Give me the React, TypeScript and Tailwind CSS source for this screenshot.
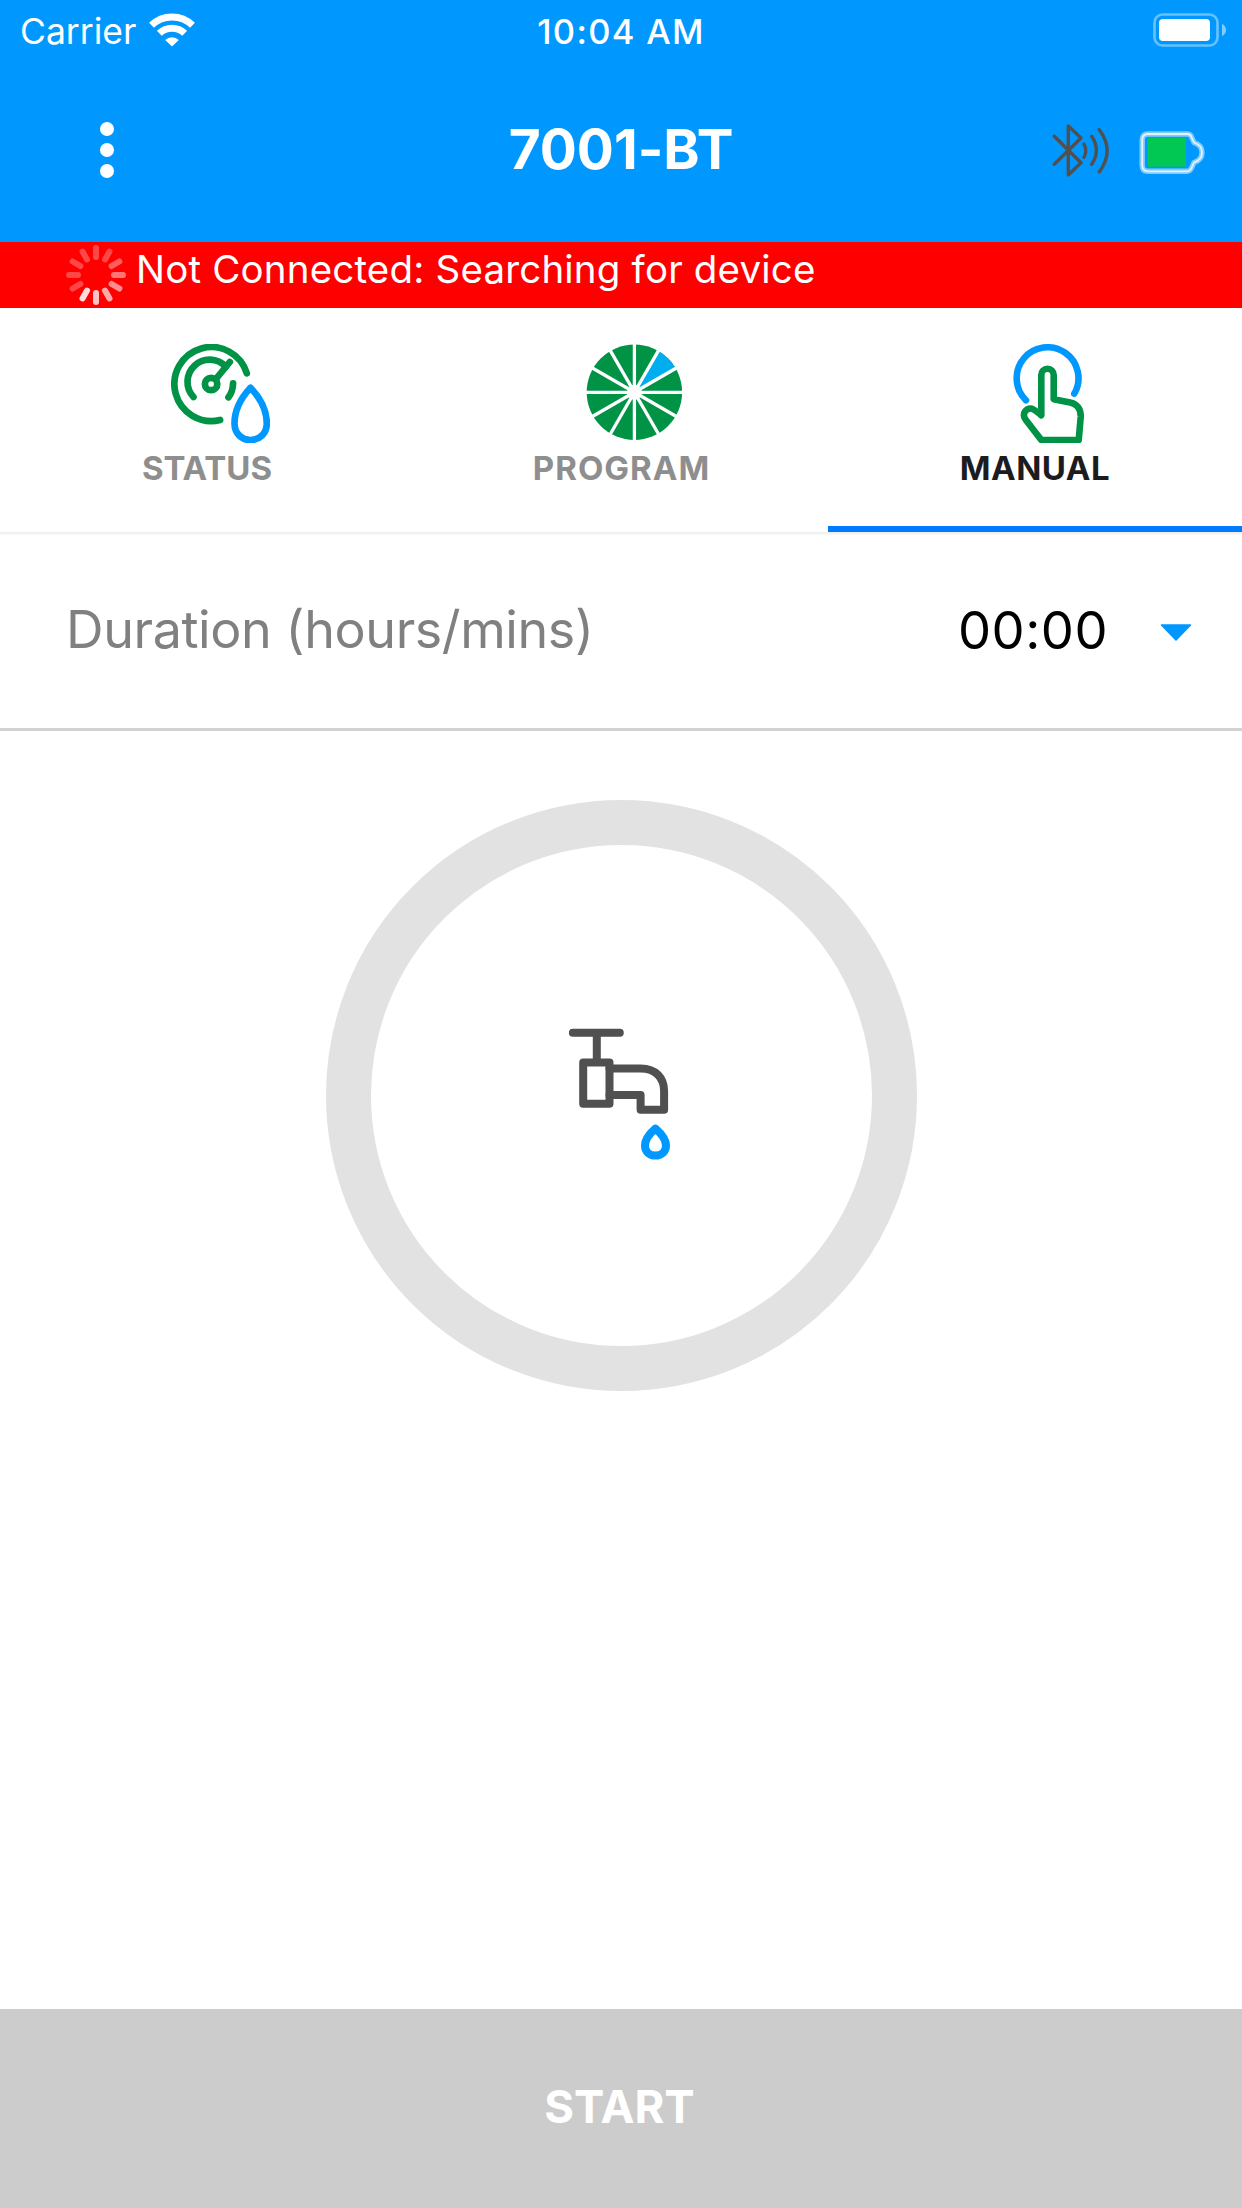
import type { ReactNode } from "react";

const GREEN = "#009245";
const BLUE = "#0098ff";

function WifiIcon() {
  return (
    <svg width="46" height="34" viewBox="0 0 46 34" fill="none" stroke="#fff" strokeWidth="7">
      <path d="M2.5 12.3A29.5 29.5 0 0 1 43.5 12.3" />
      <path d="M10.3 20.3A18.3 18.3 0 0 1 35.7 20.3" />
      <path d="M23 33.5L16.2 26.9A10.3 10.3 0 0 1 29.8 26.9Z" fill="#fff" stroke="none" />
    </svg>
  );
}

function PhoneBatteryIcon() {
  return (
    <svg width="76" height="36" viewBox="1152 12 76 36" fill="#fff">
      <rect x="1154.5" y="14.5" width="63" height="31" rx="8" fill="none" stroke="#66c1ff" strokeWidth="2.7" />
      <rect x="1159" y="19" width="51" height="22" rx="4" />
      <path d="M1222 23.7Q1226 26 1226 30Q1226 34 1222 36.3Z" fill="#80ccff" />
    </svg>
  );
}

function BluetoothIcon() {
  return (
    <svg width="58" height="54" viewBox="0 0 58 54" fill="none" stroke="#505050" strokeWidth="3.4" strokeLinecap="round" strokeLinejoin="round">
      <path d="M2.3 40.3L29 14L16.3 2V51L29 38.7L2.3 12.3" />
      <path d="M32 20Q35.5 26.7 32 33.3M39.7 12.3Q49 26.3 39.7 40.3M47.3 5.7Q63 26.7 47.3 48" />
    </svg>
  );
}

function DeviceBatteryIcon() {
  const outline =
    "M9 3H48Q51.5 3 52.5 6L55 11.5Q63 14 63 21.5Q63 29 55 31.5L52.5 37Q51 40.3 48 40.3H9Q3.2 40.3 3.2 34V9Q3.2 3 9 3Z";
  return (
    <svg width="66" height="43" viewBox="0 0 66 43" fill="none" strokeLinejoin="round">
      <path d={outline} stroke="#80ccff" strokeWidth="5.4" />
      <path d={outline} stroke="#e2f3ff" strokeWidth="1.8" />
      <rect x="8.7" y="6.7" width="38.3" height="29" fill="#00c853" />
    </svg>
  );
}

const SPOKES = [0.28, 0.28, 0.36, 0.46, 0.56, 0.66, 0.76, 0.86, 0.28, 0.28, 0.28, 0.28];

function Spinner() {
  return (
    <svg width="60" height="60" viewBox="-30 -30 60 60">
      {SPOKES.map((opacity, i) => (
        <rect key={i} x="-3" y="-30" width="6" height="15" rx="3" fill="#fff" opacity={opacity} transform={`rotate(${i * 30})`} />
      ))}
    </svg>
  );
}

function StatusIcon() {
  return (
    <svg width="99" height="99" viewBox="0.2 0 99 99" fill="none" stroke={GREEN} strokeWidth="6.7" strokeLinecap="round" strokeLinejoin="round">
      <path d="M76 29.3A37 37 0 1 0 49.3 76" />
      <path d="M22.7 53A21.5 21.5 0 0 1 55 22.7" />
      <path d="M45.5 34.5L59 18" />
      <circle cx="40.3" cy="40" r="6.2" />
      <path d="M62.3 39.3Q62 47.5 57.7 53.3" />
      <path d="M79.7 43.7C70 54 63.7 67 63.7 79.5C63.7 89.5 71 96 79.8 96C88.6 96 96 89.5 96 79.5C96 67 89.4 54 79.7 43.7Z" stroke={BLUE} />
    </svg>
  );
}

function ProgramIcon() {
  return (
    <svg width="99" height="99" viewBox="-49.4 -48.3 99 99">
      <circle r="47.7" fill={GREEN} />
      <path d="M0 0L23.85 -41.31A47.7 47.7 0 0 1 41.31 -23.85Z" fill="#00adef" />
      {[0, 30, 60, 90, 120, 150].map((a) => (
        <path key={a} d="M0 -49V49" stroke="#fff" strokeWidth="3.3" transform={`rotate(${a})`} />
      ))}
      <circle r="7.5" fill="#fff" />
    </svg>
  );
}

function ManualIcon() {
  return (
    <svg width="99" height="99" viewBox="0 0 99 99" fill="none" stroke={GREEN} strokeWidth="6.6" strokeLinecap="round" strokeLinejoin="round">
      <path d="M27 56.3A30.9 30.9 0 1 1 75.3 49.7" stroke={BLUE} />
      <path d="M42.3 71.3V31A6.2 6.2 0 0 1 54.7 31V55.3L71 58.6C78.5 60 82 65.5 81.7 73L79.7 96H42.3L26.5 75.5C22.5 69.5 27 64.3 32 64.5C34.5 64.6 36 66.5 42.3 71.3Z" />
    </svg>
  );
}

function TapIcon() {
  return (
    <svg width="104" height="135" viewBox="29.2 28 104 135" fill="none" stroke="#505050" strokeWidth="8" strokeLinecap="round" strokeLinejoin="round">
      <path d="M33 32.8H80M57 33V62" />
      <rect x="43.4" y="62.4" width="26.3" height="41.4" />
      <path d="M69.7 68.5H101C116 68.5 124.3 78 124.3 91V109.7H100.8V94.9H69.7" />
      <path d="M115.6 128.6C110 133.5 105.2 140 105.2 145.5C105.2 152 110 155.6 115.6 155.6C121.2 155.6 126.2 152 126.2 145.5C126.2 140 121.2 133.5 115.6 128.6Z" stroke={BLUE} />
    </svg>
  );
}

function Tab({ icon, active, children }: { icon: ReactNode; active?: boolean; children: ReactNode }) {
  return (
    <button
      className={
        active
          ? "flex flex-1 flex-col items-center border-b-6 border-[#007aff] pt-9 text-[#1c1c1e]"
          : "flex flex-1 flex-col items-center border-b-6 border-transparent pt-9 text-[#8e8e8e]"
      }
    >
      <span className="pl-[27px]">{icon}</span>
      <span className="mt-[5px] text-[33px] leading-10 font-bold">{children}</span>
    </button>
  );
}

export default function App() {
  return (
    <div className="flex h-[2208px] w-[1242px] flex-col bg-white font-['Inter',sans-serif]">
      <header className="h-[242px] bg-[#0098ff] text-white">
        <div className="grid h-[63px] grid-cols-3 items-center px-5">
          <div className="flex items-center gap-[13px]">
            <span className="text-[35.5px] leading-none">Carrier</span>
            <span className="-mt-1"><WifiIcon /></span>
          </div>
          <span className="pt-px text-center text-[34.5px] leading-none font-medium tracking-[1.3px] whitespace-nowrap">10:04 AM</span>
          <span className="-mt-[3px] -mr-[6px] justify-self-end"><PhoneBatteryIcon /></span>
        </div>
        <div className="grid h-[179px] grid-cols-3 items-center pr-[37px] pb-[7px] pl-[100px]">
          <button className="mt-[2px] flex w-[14px] flex-col items-center gap-[7px]">
            <span className="size-[14px] rounded-full bg-white" />
            <span className="size-[14px] rounded-full bg-white" />
            <span className="size-[14px] rounded-full bg-white" />
          </button>
          <h1 className="-ml-[63px] text-center text-[55px] leading-none font-bold [font-feature-settings:'calt'_0]">7001-BT</h1>
          <div className="mt-1 flex items-center justify-end gap-[29px]">
            <BluetoothIcon />
            <span className="mt-[3px]"><DeviceBatteryIcon /></span>
          </div>
        </div>
      </header>

      <div className="flex h-[66px] items-center bg-[#ff0000] pl-[66px] text-white">
        <Spinner />
        <span className="-mt-3 ml-[10px] text-[38.5px] leading-none tracking-[0.18px]">Not Connected: Searching for device</span>
      </div>

      <nav className="flex h-56">
        <Tab icon={<StatusIcon />}>STATUS</Tab>
        <Tab icon={<ProgramIcon />}><span className="pl-px tracking-[1px]">PROGRAM</span></Tab>
        <Tab icon={<ManualIcon />} active><span className="tracking-[0.5px]">MANUAL</span></Tab>
      </nav>
      <div className="h-[3px] bg-linear-to-b from-[#ececec] to-[#fafafa]" />

      <div className="flex h-[196px] items-center justify-between border-b-3 border-[#d3d3d3] pr-[50px] pb-[3px] pl-[66px]">
        <span className="text-[52px] leading-none tracking-[-0.4px] text-[#808080]">Duration (hours/mins)</span>
        <div className="flex items-center gap-[52px] text-black">
          <span className="text-[52.5px] leading-none tracking-[0.5px] [font-feature-settings:'calt'_0]">00:00</span>
          <svg width="32" height="18" viewBox="0 0 32 18" className="mt-[6px]">
            <path d="M1.5 1H30.5L16 16Z" fill={BLUE} stroke={BLUE} strokeWidth="1.5" strokeLinejoin="round" />
          </svg>
        </div>
      </div>

      <main className="flex flex-1 justify-center pt-[69px]">
        <div className="flex size-[591px] items-center justify-center rounded-full border-45 border-[#e2e2e2]">
          <TapIcon />
        </div>
      </main>

      <button className="h-[199px] bg-[#cccccc] pr-[3px] pb-[3px] text-[45.5px] font-bold text-white">START</button>
    </div>
  );
}
